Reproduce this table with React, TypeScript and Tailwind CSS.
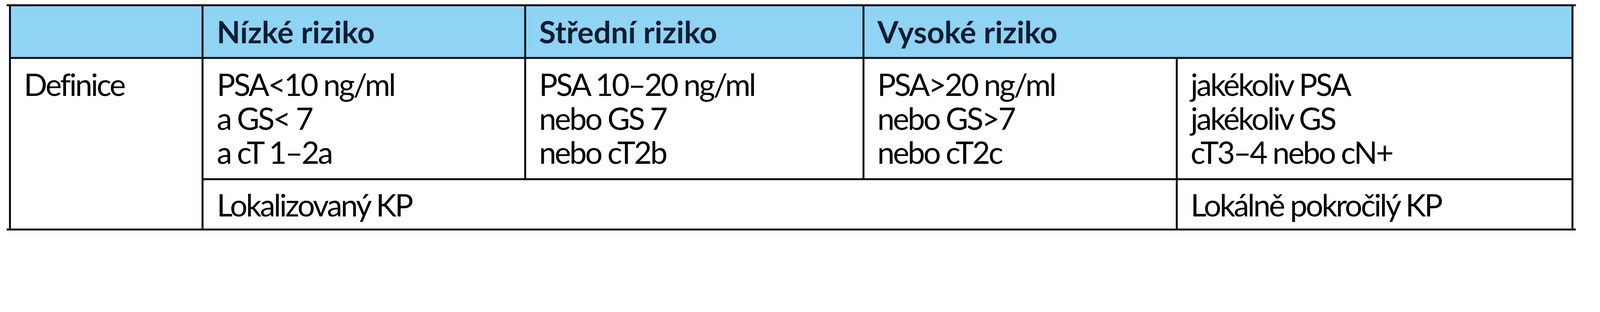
import React from "react";

const rule = "bg-[#060a12]";
const edge = "border-[#060a12]";

const App: React.FC = () => {
  return (
    <div
      className="min-h-[700px] bg-white pt-[11px] pl-[17px] text-black"
      style={{ fontFamily: "Lato, 'Open Sans', sans-serif" }}
    >
      {/* top rule */}
      <div className={`h-[5px] w-[4017px] ${rule}`} />

      <div className={`ml-[6px] w-[4005px] border-x-[5px] ${edge}`}>
        {/* header */}
        <div className="flex h-[130px] bg-[#8fd3f5] text-[78px] font-bold leading-[87px] text-[#0c1d30]">
          <div className="w-[488px]" />
          <div className={`flex w-[826px] items-center border-l-[5px] ${edge} pl-[34px]`}>Nízké riziko</div>
          <div className={`flex w-[866px] items-center border-l-[5px] ${edge} pl-[33px]`}>Střední riziko</div>
          <div className={`flex flex-1 items-center border-l-[5px] ${edge} pl-[33px]`}>Vysoké riziko</div>
        </div>
        <div className={`h-[5px] ${rule}`} />

        {/* body */}
        <div className="flex text-[79px] leading-[87px] tracking-[-4px]">
          <div className="w-[488px] pt-[21px] pl-[33px]">Definice</div>
          <div className={`flex flex-1 flex-col border-l-[5px] ${edge}`}>
            <div className="flex h-[306px]">
              <div className="w-[821px] pt-[21px] pl-[34px]">
                <div>PSA&lt;10 ng/ml</div>
                <div>a GS&lt; 7</div>
                <div>a cT 1–2a</div>
              </div>
              <div className={`w-[866px] border-l-[5px] ${edge} pt-[21px] pl-[33px]`}>
                <div>PSA 10–20 ng/ml</div>
                <div>nebo GS 7</div>
                <div>nebo cT2b</div>
              </div>
              <div className={`w-[802px] border-l-[5px] ${edge} pt-[21px] pl-[33px]`}>
                <div>PSA&gt;20 ng/ml</div>
                <div>nebo GS&gt;7</div>
                <div>nebo cT2c</div>
              </div>
              <div className={`flex-1 border-l-[5px] ${edge} pt-[21px] pl-[33px]`}>
                <div>jakékoliv PSA</div>
                <div>jakékoliv GS</div>
                <div>cT3–4 nebo cN+</div>
              </div>
            </div>
            <div className={`h-[5px] ${rule}`} />
            <div className="flex h-[124px]">
              <div className="flex w-[2489px] items-center pl-[34px]">Lokalizovaný KP</div>
              <div className={`flex flex-1 items-center border-l-[5px] ${edge} pl-[33px]`}>Lokálně pokročilý KP</div>
            </div>
          </div>
        </div>
      </div>

      {/* bottom rule */}
      <div className={`h-[5px] w-[4017px] ${rule}`} />
    </div>
  );
};

export default App;
